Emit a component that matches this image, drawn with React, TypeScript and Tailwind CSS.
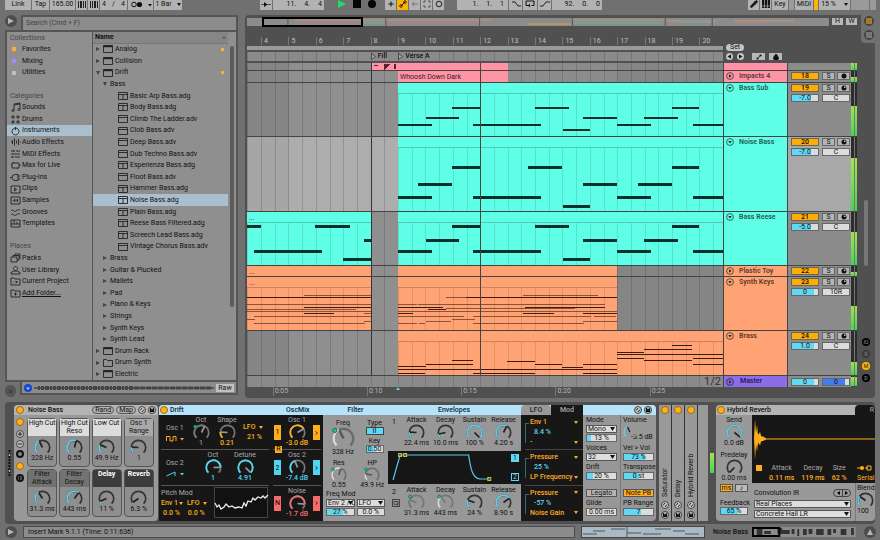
import type { ReactNode } from "react";
import { useId, useState } from "react";
import { clsx } from "clsx";
import { Lock, Pencil } from "lucide-react";

type Note = [x1: number, x2: number, y: number, faint?: boolean];

interface Clip {
  from: number;
  to: number;
  name?: string;
}

interface TrackData {
  name: string;
  color: string;
  height: string;
  size: number;
  number?: string;
  volume?: string;
  pan?: string;
  open?: boolean;
  selected?: boolean;
  audio?: boolean;
  thickness?: number;
  level: number;
  clips: Clip[];
  notes: Note[];
}

const VIEW = 476;
const BAR = 27.4;
const FIRST_BAR = 14;

const TRACKS: TrackData[] = [
  { name: "", color: "#ff94a6", height: "h-2", size: 8, level: 100, clips: [{ from: 125, to: 261 }], notes: [] },
  {
    name: "Impacts 4", color: "#ff94a6", height: "h-3", size: 12, number: "18", audio: true, level: 50,
    clips: [{ from: 151, to: 261, name: "Whoosh Down Dark" }], notes: [],
  },
  {
    name: "Bass Sub", color: "#5effe6", height: "h-[54px]", size: 54, number: "19", volume: "-7.0", pan: "C", open: true, level: 56, thickness: 2,
    clips: [{ from: 151, to: 476 }],
    notes: [[151, 185, 42], [179, 212, 35], [205, 233, 25], [226, 294, 42], [288, 322, 25], [316, 343, 47], [336, 370, 35], [370, 404, 42], [397, 431, 35], [425, 452, 25], [446, 476, 42]],
  },
  {
    name: "Noise Bass", color: "#5effe6", height: "h-[75px]", size: 75, number: "20", volume: "-7.0", pan: "C", open: true, selected: true, level: 72, thickness: 3,
    clips: [{ from: 151, to: 476 }],
    notes: [[151, 185, 60], [171, 205, 47], [205, 233, 30], [226, 294, 60], [281, 315, 30], [316, 343, 69], [336, 370, 47], [370, 404, 60], [391, 425, 47], [425, 452, 30], [446, 476, 60]],
  },
  {
    name: "Bass Reese", color: "#5effe6", height: "h-[54px]", size: 54, number: "21", volume: "-5.0", pan: "C", open: true, level: 62, thickness: 3,
    clips: [{ from: 0, to: 124, name: "..." }, { from: 151, to: 476 }],
    notes: [[0, 14, 14], [68, 103, 14], [117, 124, 28], [7, 75, 39], [96, 124, 47], [151, 185, 39], [179, 212, 28], [205, 233, 14], [226, 294, 39], [288, 322, 14], [316, 343, 47], [336, 370, 28], [370, 404, 39], [397, 431, 28], [425, 452, 14], [446, 476, 39]],
  },
  {
    name: "Plastic Toy", color: "#ffa374", height: "h-[11px]", size: 11, number: "22", level: 40,
    clips: [{ from: 0, to: 124, name: "..." }, { from: 151, to: 370 }], notes: [],
  },
  {
    name: "Synth Keys", color: "#ffa374", height: "h-[54px]", size: 54, number: "23", volume: "0", pan: "10R", open: true, level: 46, thickness: 1,
    clips: [{ from: 0, to: 124, name: "..." }, { from: 151, to: 370 }],
    notes: [
      [57, 124, 18, true], [0, 124, 20], [0, 124, 27, true], [57, 124, 30], [0, 109, 32, true], [0, 124, 34, true], [57, 87, 36], [117, 124, 36, true], [7, 124, 39, true], [0, 8, 42, true], [117, 124, 44, true], [7, 118, 46, true],
      [199, 219, 20, true], [219, 370, 20], [276, 351, 18, true], [151, 170, 27, true], [171, 358, 27, true], [151, 196, 30], [181, 199, 32], [278, 358, 30], [199, 328, 31, true], [151, 370, 34, true], [151, 166, 36], [276, 307, 36],
      [336, 370, 36], [151, 217, 39, true], [226, 344, 39, true], [347, 369, 39, true], [205, 228, 42, true], [179, 204, 44, true], [336, 370, 44, true], [151, 170, 46, true], [172, 178, 46, true], [226, 337, 46, true],
    ],
  },
  {
    name: "Brass", color: "#ffa374", height: "h-[45px]", size: 45, number: "24", volume: "1.0", pan: "C", open: true, level: 30, thickness: 1,
    clips: [{ from: 151, to: 476 }],
    notes: [
      [205, 226, 29], [179, 226, 33], [151, 179, 35], [151, 370, 38], [151, 178, 42], [226, 288, 42], [336, 370, 42], [260, 288, 30], [288, 315, 33], [336, 370, 33], [315, 336, 36],
      [370, 397, 21], [370, 476, 23], [370, 397, 27], [397, 445, 18], [425, 445, 14], [397, 445, 29], [446, 476, 27], [446, 476, 33],
    ],
  },
];

const GRID = Array.from({ length: 35 }, (_, i) => FIRST_BAR + ((i - 1) * BAR) / 2);

function TrackLane({ track }: { track: TrackData }) {
  const t = track.thickness ?? 1;
  return (
    <div className="relative min-w-0 flex-1 overflow-hidden">
      <svg className="absolute inset-0 h-full w-full" viewBox={`0 0 ${VIEW} ${track.size}`} preserveAspectRatio="none" shapeRendering="crispEdges">
        <rect width={VIEW} height={track.size} fill={track.selected ? "#a6a6a6" : "#858585"} />
        <rect x={42} width={109} height={track.size} fill={track.selected ? "#adadad" : "#8f8f8f"} />
        <rect x={261} width={109} height={track.size} fill="#8c8c8c" />
        {track.clips.map((c) => (
          <rect key={c.from} x={c.from} width={c.to - c.from} height={track.size} fill={track.color} />
        ))}
        {GRID.map((x) => {
          const inClip = track.clips.some((c) => x >= c.from && x < c.to);
          return <rect key={x} x={x} y={inClip ? 11 : 0} width={1} height={track.size} fill="#000" opacity={inClip ? 0.11 : 0.15} />;
        })}
        {track.open && track.clips.map((c) => (
          <rect key={c.from} x={c.from} y={10} width={c.to - c.from} height={1} fill="#000" opacity={0.2} />
        ))}
        {track.notes.map(([x1, x2, y, faint], i) => (
          <rect key={i} x={x1} y={y - Math.floor(t / 2)} width={x2 - x1} height={t} fill={track.color === "#5effe6" ? "#0b2f2c" : "#3d1c0c"} opacity={faint ? 0.6 : 1} />
        ))}
        {!track.name && <path d="M127 2h4v1h-4zM137 1l6 0l-6 6zM147 1h2v5h-2z" fill="#5c2430" />}
        <rect x={124} width={1} height={track.size} fill="#333" />
        <rect x={233} width={1} height={track.size} fill="#444" />
      </svg>
      {track.clips.map((c) =>
        c.name ? (
          <span key={c.from} className="absolute top-0 pl-0.5 leading-[12px] text-[#3a1a1f]" style={{ left: `${(c.from / VIEW) * 100}%` }}>
            {c.name}
          </span>
        ) : null
      )}
      <div className="absolute inset-x-0 bottom-0 h-px bg-[#444]" />
    </div>
  );
}

function Meter({ level }: { level: number }) {
  return (
    <div className="flex w-[6px] gap-px border-b border-[#444] bg-[#777]">
      {[0, 1].map((i) => (
        <div key={i} className="flex flex-1 flex-col justify-end bg-[#2c2c2c]">
          <div className="bg-linear-to-b from-[#a2e34c] to-[#3fd458]" style={{ height: `${level}%` }} />
        </div>
      ))}
    </div>
  );
}

function ValueBox({ label, value, fill = 0, color = "#5fd9f5", className }: { label: string; value: string; fill?: number; color?: string; className?: string }) {
  return (
    <div className={clsx("relative h-2 border border-[#666] bg-[#dcdcdc]", className)}>
      <div className="absolute inset-y-0 left-0" style={{ width: `${fill}%`, backgroundColor: color }} />
      <input aria-label={label} defaultValue={value} className="absolute inset-0 w-full bg-transparent text-center leading-none outline-none" />
    </div>
  );
}

function TrackRow({ track }: { track: TrackData }) {
  const [active, setActive] = useState(true);
  return (
    <div className={clsx("flex", track.height)}>
      <TrackLane track={track} />
      <div className="flex w-16 gap-1 border-b border-l border-[#444] pl-0.5 pt-px" style={{ backgroundColor: track.color }}>
        {track.name && (
          <>
            <button aria-label={`Fold ${track.name}`} className="h-2 w-2">
              <svg viewBox="0 0 8 8" className="h-2 w-2">
                <circle cx="4" cy="4" r="3.4" fill="none" stroke="#1d2b2a" strokeWidth=".7" />
                <path d={track.open ? "M2.300 3h3.400L4 5.600z" : "M3 2.300v3.400L5.600 4z"} fill="#222" />
              </svg>
            </button>
            <span className="pl-px font-bold leading-[9px] text-black/65">{track.name}</span>
          </>
        )}
      </div>
      <div className={clsx("w-16 border-b border-l border-[#444] pl-[3px] pt-px", track.selected ? "bg-[#a8a8a8]" : "bg-[#8c8c8c]")}>
        {track.number && (
          <div className="flex gap-0.5">
            <button onClick={() => setActive(!active)} className={clsx("h-2 w-[28px] border border-[#666] font-medium leading-[7px]", active ? "bg-[#ffad00]" : "bg-[#aaa]")}>
              {track.number}
            </button>
            <button className="ml-px h-2 w-[13px] border border-[#666] bg-[#b5b5b5] leading-[7px]">S</button>
            <button aria-label="Arm" className="flex h-2 w-[13px] items-center justify-center border border-[#666] bg-[#b5b5b5]">
              <svg viewBox="0 0 6 6" className="size-1.5">
                <circle cx="3" cy="3" r="2.500" fill="#111" />
                {!track.audio && <path d="M3 3V1.200A1.800 1.800 0 0 1 4.800 3z" fill="#b5b5b5" />}
              </svg>
            </button>
          </div>
        )}
        {track.volume && track.pan && (
          <div className="mt-0.5 flex gap-[3px]">
            <ValueBox label={`${track.name} volume`} value={track.volume} fill={track.volume.startsWith("-") ? 72 : 86} className="w-[28px]" />
            <ValueBox label={`${track.name} pan`} value={track.pan} className="w-[28px]" />
          </div>
        )}
      </div>
      <Meter level={track.level} />
    </div>
  );
}

function Cell({ children, className, label }: { children?: ReactNode; className?: string; label?: string }) {
  return (
    <button aria-label={label} className={clsx("flex h-[10px] items-center justify-center whitespace-nowrap pb-0.5", className)}>
      {children}
    </button>
  );
}

function TopBar() {
  return (
    <header className="flex h-[14px] items-start pl-[5px] pr-1">
      <div className="flex gap-px">
        <Cell className="w-[26px] bg-[#b2b2b2]">Link</Cell>
        <Cell className="w-[17px] bg-[#b2b2b2]">Tap</Cell>
        <Cell className="w-[25px] bg-[#b2b2b2]">165.00</Cell>
        <Cell className="w-[11px] bg-[#b2b2b2]" label="Nudge down"><svg viewBox="0 0 10 7" className="h-[7px] w-2.5"><path d="M1 0h1v7H1zM3 0h2v7H3zM6 0h1v7H6zM8 0h1v7H8z" fill="#222" /></svg></Cell>
        <Cell className="w-[11px] bg-[#b2b2b2]" label="Nudge up"><svg viewBox="0 0 10 7" className="h-[7px] w-2.5"><path d="M1 0h1v7H1zM3 0h1v7H3zM5 0h2v7H5zM8 0h1v7H8z" fill="#222" /></svg></Cell>
        <Cell className="w-[27px] gap-1.5 bg-[#b2b2b2]"><span>4</span><span>/</span><span>4</span></Cell>
        <Cell className="w-[25px] bg-[#b2b2b2]" label="Metronome"><svg viewBox="0 0 22 7" className="h-[7px] w-[22px]"><circle cx="4" cy="3.500" r="2.300" fill="none" stroke="#111" /><circle cx="9.500" cy="3.500" r="2.600" fill="#111" /><path d="M18 3h4l-2 2.500z" fill="#111" /></svg></Cell>
        <Cell className="w-[28px] gap-[5px] bg-[#b2b2b2]">1 Bar <Down /></Cell>
      </div>
      <div className="ml-[78px] flex gap-px">
        <Cell className="w-3 bg-[#b2b2b2]" label="Follow"><svg viewBox="0 0 10 7" className="h-[7px] w-2.5"><path d="M0 3.500h10" stroke="#222" strokeWidth=".7" /><path d="M3 1l3.500 2.500L3 6z" fill="#111" /></svg></Cell>
        <Cell className="w-[51px] justify-end gap-2 bg-[#b2b2b2] pr-0.5"><span>11.</span><span>4.</span><span>4</span></Cell>
      </div>
      <div className="ml-[11px] flex gap-1">
        <Cell className="w-[13px]" label="Play"><svg viewBox="0 0 8 8" className="size-2"><path d="M0 0l8 4-8 4z" fill="#20dd68" /></svg></Cell>
        <Cell className="w-[9px]" label="Stop"><svg viewBox="0 0 8 8" className="size-2"><path d="M0 0h8v8H0z" fill="#050505" /></svg></Cell>
        <Cell className="w-[13px]" label="Record"><svg viewBox="0 0 8 8" className="size-2"><circle cx="4" cy="4" r="4" fill="#050505" /></svg></Cell>
      </div>
      <div className="ml-[7px] flex gap-px">
        <Cell className="w-[11px] bg-[#b2b2b2]" label="Overdub"><svg viewBox="0 0 8 8" className="size-2"><path d="M4 1.500v5M1.500 4h5" stroke="#111" /></svg></Cell>
        <Cell className="w-[11px] bg-[#ffb300]" label="Automation arm"><svg viewBox="0 0 8 8" className="size-2"><path d="M2 6l4-4" stroke="#111" /><circle cx="2" cy="6" r="1.300" fill="none" stroke="#111" strokeWidth=".8" /><circle cx="6" cy="2" r="1.300" fill="none" stroke="#111" strokeWidth=".8" /></svg></Cell>
        <Cell className="w-[11px] bg-[#b2b2b2]" label="Re-enable automation"><svg viewBox="0 0 8 8" className="size-2"><path d="M1 4h6M3.500 2L1 4l2.500 2" stroke="#777" fill="none" /></svg></Cell>
        <Cell className="w-[11px] bg-[#b2b2b2]" label="Capture"><svg viewBox="0 0 8 8" className="size-2"><path d="M1 3V1h2M5 1h2v2M7 5v2H5M3 7H1V5" stroke="#555" fill="none" /></svg></Cell>
        <Cell className="w-[11px] bg-[#b2b2b2]" label="Session record"><svg viewBox="0 0 8 8" className="size-2"><circle cx="4" cy="4" r="2.800" fill="none" stroke="#222" /></svg></Cell>
      </div>
      <div className="ml-[13px] flex gap-px">
        <Cell className="w-[51px] justify-end gap-2 bg-[#b2b2b2] pr-1"><span>1.</span><span>1.</span><span>1</span></Cell>
        <Cell className="w-[13px] bg-[#b2b2b2]" label="Punch in"><svg viewBox="0 0 10 8" className="h-2 w-2.5"><path d="M1 2h3l3 4h3" stroke="#222" fill="none" /></svg></Cell>
        <Cell className="w-[14px] bg-[#b2b2b2]" label="Loop"><svg viewBox="0 0 10 8" className="h-2 w-2.5"><path d="M3.500 5.500H1V1h8v4.500H6.500" stroke="#111" fill="none" /><path d="M5 3.500l-2 2 2 2z" fill="#111" /></svg></Cell>
        <Cell className="w-[13px] bg-[#b2b2b2]" label="Punch out"><svg viewBox="0 0 10 8" className="h-2 w-2.5"><path d="M0 6h3l3-4h4" stroke="#222" fill="none" /></svg></Cell>
        <Cell className="w-[50px] justify-end gap-2 bg-[#b2b2b2] pr-0.5"><span>92.</span><span>0.</span><span>0</span></Cell>
      </div>
      <div className="ml-auto flex gap-px">
        <Cell className="w-[11px] bg-[#b2b2b2]" label="Draw mode"><Pencil className="size-2" strokeWidth={3} fill="#111" /></Cell>
        <Cell className="w-[11px] bg-[#b2b2b2]" label="MIDI keyboard"><svg viewBox="0 0 8 8" className="size-2"><path d="M0 0h8v8H0z" fill="#111" /><path d="M2.500 0v8M5.500 0v8M0 6h8" stroke="#aaa" strokeWidth=".7" /></svg></Cell>
        <Cell className="w-4 bg-[#b2b2b2]">Key</Cell>
        <Cell className="w-[5px] bg-[#9a9a9a]" label="Key indicator" />
        <Cell className="w-[18px] bg-[#b2b2b2]">MIDI</Cell>
        <Cell className="w-1 bg-[#ffb300]" label="CPU" />
        <Cell className="w-[31px] gap-2 bg-[#b2b2b2]">15 % <Down /></Cell>
        <Cell className="w-[18px] bg-[#9a9a9a]" label="Overload" />
        <Cell className="w-[6px] bg-[#9a9a9a]" label="Disk" />
      </div>
    </header>
  );
}

function Down() {
  return <svg viewBox="0 0 4 3" className="h-[3px] w-1 shrink-0"><path d="M0 0h4L2 3z" fill="currentColor" /></svg>;
}

const CATEGORY_ICONS: Record<string, string> = {
  Sounds: "M4 8V2l6-1v6M4 3l6-1M2 8.500a1 1 0 1 0 2 0a1 1 0 1 0-2 0M8 7.500a1 1 0 1 0 2 0a1 1 0 1 0-2 0",
  Drums: "M2 2h2v2H2zM7 2h2v2H7zM2 7h2v2H2zM7 7h2v2H7z",
  Instruments: "M5 2a3.500 3.500 0 1 0 1 0M5.500 1v3",
  "Audio Effects": "M1 5h1M2.500 3v4M4.500 1.500v7M6.500 3.500v3M8.500 2v6M10 5h1",
  "MIDI Effects": "M1 2h3M6 2h4M1 5h5M8 5h2M1 8h2M5 8h5M4 1v2M7 4v2M3 7v2",
  "Max for Live": "M2 3h7v5H2zM3.500 2v1M7.500 8v1M1 5h1M9 5h1.500",
  "Plug-Ins": "M8 2.500H5a3 3 0 0 0 0 6h3zM0 5.500h2M8 4h2.500M8 7h2.500",
  Clips: "M1 2h9v7H1zM4.500 4v3l2-1.500z",
  Samples: "M1 2h9v7H1zM3 5v1M4.500 4v3M6 4.500v2M7.500 4v3",
  Grooves: "M1 4c2-3 3 2 5 0s3-1 4-1M1 8c2-3 3 2 5 0s3-1 4-1",
  Templates: "M1 2h9v7H1zM1 6h9M4 2v4M7 4v2",
  Packs: "M1 4h6v5H1zM3 4V2.500h6V7H7M5 2V1h5v5",
  "User Library": "M5.500 1.500a2 2 0 1 0 .1 0M1 9V7.500L4 6h3l3 1.500V9z",
  "Current Project": "M1 9V2h3l1 1h5v6zM3.500 6h1M5.500 5l2 1-2 1",
  "Add Folder...": "M1 9V2h3l1 1h5v6zM5.500 4.500v3M4 6h3",
};

const SIDEBAR: { text?: string; heading?: boolean; swatch?: string }[] = [
  { text: "Collections", heading: true },
  { text: "Favorites", swatch: "bg-[#ffad33]" },
  { text: "Mixing", swatch: "bg-[#a48cf0]" },
  { text: "Utilities", swatch: "bg-[#c4baba]" },
  {},
  { text: "Categories", heading: true },
  { text: "Sounds" }, { text: "Drums" }, { text: "Instruments" }, { text: "Audio Effects" }, { text: "MIDI Effects" }, { text: "Max for Live" },
  { text: "Plug-Ins" }, { text: "Clips" }, { text: "Samples" }, { text: "Grooves" }, { text: "Templates" },
  {},
  { text: "Places", heading: true },
  { text: "Packs" }, { text: "User Library" }, { text: "Current Project" }, { text: "Add Folder..." },
];

const FILES: { name: string; level: 0 | 1 | 2; open?: boolean; starred?: boolean; folder?: boolean }[] = [
  { name: "Analog", level: 0, starred: true },
  { name: "Collision", level: 0 },
  { name: "Drift", level: 0, open: true, starred: true },
  { name: "Bass", level: 1, open: true },
  ...["Basic Arp Bass.adg", "Body Bass.adg", "Climb The Ladder.adv", "Clob Bass.adv", "Deep Bass.adv", "Dub Techno Bass.adv", "Esperienza Bass.adg", "Floot Bass.adv", "Hammer Bass.adg", "Noise Bass.adg", "Plain Bass.adg", "Reese Bass Filtered.adg", "Screech Lead Bass.adg", "Vintage Chorus Bass.adv"].map((name) => ({ name, level: 2 as const })),
  ...["Brass", "Guitar & Plucked", "Mallets", "Pad", "Piano & Keys", "Strings", "Synth Keys", "Synth Lead"].map((name) => ({ name, level: 1 as const })),
  { name: "Drum Rack", level: 0 },
  { name: "Drum Synth", level: 0, folder: true },
  { name: "Electric", level: 0 },
];

function FileIcon({ name, folder }: { name: string; folder?: boolean }) {
  const rack = name.endsWith(".adg");
  const preset = rack || name.endsWith(".adv");
  return (
    <svg viewBox="0 0 10 8" className="h-2 w-2.5 shrink-0" fill="none" stroke="#222" strokeWidth=".9">
      <path d={folder ? "M.5 7.500v-7h3l1 1h5v6z" : "M.5.5h9v7h-9z"} />
      {!folder && <path d={preset ? "M.5 2.500h9" : "M.5 1.300h9"} strokeWidth={preset ? 0.9 : 1.8} />}
      {rack && <path d="M5 2.500v5" />}
    </svg>
  );
}

function Browser() {
  const [selected, setSelected] = useState("Noise Bass.adg");
  const [category, setCategory] = useState("Instruments");
  return (
    <section className="flex w-[233px] shrink-0 flex-col">
      <div className="flex h-[15px] gap-1">
        <button aria-label="Hide browser" className="size-3 rounded-full bg-[#4d4d4d] p-[3px]">
          <svg viewBox="0 0 6 6"><path d="M0 0l6 3-6 3z" fill="#b5b5b5" /></svg>
        </button>
        <div className="flex flex-1 border-2 border-b-0 border-[#555] bg-[#8c8c8c]">
          <input type="search" aria-label="Search" placeholder="Search (Cmd + F)" className="w-full bg-transparent pl-[3px] outline-none placeholder:text-[#444]" />
        </div>
      </div>
      <div className="flex min-h-0 flex-1 border-2 border-[#555] bg-[#8f8f8f]">
        <nav className="grid w-[85px] grid-rows-[repeat(30,minmax(0,1fr))]">
          {SIDEBAR.map((item, i) =>
            !item.text ? <span key={i} /> : item.heading ? (
              <h2 key={i} className="flex items-center pl-[3px] text-[#444]">{item.text}</h2>
            ) : (
              <button
                key={i}
                onClick={() => setCategory(item.text ?? "")}
                className={clsx("flex items-center gap-px pl-[3px]", item.text === category && "bg-[#aabfcd]", item.text === "Add Folder..." && "underline")}
              >
                {item.swatch ? <span className="flex w-[11px] pl-0.5"><span className={clsx("size-1", item.swatch)} /></span> : (
                  <svg viewBox="0 0 11 10" className="h-2.5 w-[11px]" fill="none" stroke="#222" strokeWidth=".9"><path d={CATEGORY_ICONS[item.text]} /></svg>
                )}
                {item.text}
              </button>
            )
          )}
        </nav>
        <div className="relative grid min-w-0 flex-1 grid-rows-[repeat(30,minmax(0,1fr))] border-l border-[#555] pr-2">
          <div className="flex items-center justify-between border-b border-[#777] bg-[#868686] pl-0.5 pr-0.5 font-bold">
            Name <svg viewBox="0 0 4 4" className="size-1"><path d="M0 4l2-4 2 4z" fill="#666" /></svg>
          </div>
          {FILES.map((f) => (
            <button
              key={f.name}
              onClick={() => setSelected(f.name)}
              className={clsx("flex items-center gap-0.5", f.level === 0 ? "pl-[3px]" : f.level === 1 ? "pl-2.5" : "pl-[25px]", f.name === selected && "bg-[#aabfcd]")}
            >
              {f.level < 2 && (
                <svg viewBox="0 0 4 4" className="mr-px size-1 shrink-0"><path d={f.open ? "M0 0h4L2 4z" : "M0 0v4l4-2z"} fill="#444" /></svg>
              )}
              {f.level !== 1 && <FileIcon name={f.name} folder={f.folder} />}
              <span className="whitespace-nowrap">{f.name}</span>
              {f.starred && <span className="ml-auto mr-1 size-[3px] bg-[#ffad33]" />}
            </button>
          ))}
          <div className="absolute right-0.5 top-3.5 h-3/4 w-1 rounded bg-[#5b5b5b]" />
        </div>
      </div>
      <div className="flex h-4 items-start gap-1">
        <button aria-label="Preview" className="mt-[3px] size-3 rounded-full bg-[#555] p-[3px]">
          <svg viewBox="0 0 6 6"><path d="M1 2h4M1 4h4" stroke="#333" /></svg>
        </button>
        <div className="flex h-[13px] flex-1 items-center gap-0.5 border-2 border-t-0 border-[#555] bg-[#8c8c8c] px-0.5">
          <svg viewBox="0 0 8 8" className="size-2"><circle cx="4" cy="4" r="4" fill="#1747d1" /><path d="M2 3.500h4L4 6z" fill="#bcd" /></svg>
          <svg viewBox="0 0 180 6" preserveAspectRatio="none" className="h-1.5 min-w-0 flex-1">
            <path d="M0 3h180" stroke="#444" strokeWidth="1.500" />
            <path d="M4 3h96" stroke="#444" strokeWidth="4" strokeDasharray="2 1 3 1 4 1" />
            <path d="M100 3h78" stroke="#444" strokeWidth="3" strokeDasharray="5 1" />
          </svg>
          <button className="h-[8px] w-[18px] bg-[#c2c2c2] leading-[8px]">Raw</button>
        </div>
      </div>
    </section>
  );
}

function Arrangement() {
  return (
    <section className="flex min-w-0 flex-1 flex-col rounded-sm bg-[#505050] pl-0.5">
      <div className="flex h-12 gap-1">
        <div className="min-w-0 flex-1">
          <div className="mt-[3px] flex h-2 gap-[3px]">
            <div className="relative flex-1 bg-[#8c8c8c]">
              <svg viewBox="0 0 583 8" preserveAspectRatio="none" className="absolute inset-0 h-full w-full" shapeRendering="crispEdges">
                <path d="M48 2h195M326 2h92M420 3h50M488 3h60" stroke="#c69672" />
                <path d="M115 5h24M326 5h90M430 4h34" stroke="#5cb8ab" />
                <path d="M48 4h67M139 5h94M490 5h30" stroke="#b07f87" />
                <path d="M281 6h44" stroke="#d8a53f" />
                <path d="M41 0v8M139 0v8M233 0v8M326 0v8M419 0v8M466 0v8" stroke="#555" />
              </svg>
              <div className="absolute -inset-y-px left-[15px] w-[101px] border-2 border-black" />
            </div>
            <button className="h-[7px] w-[11px] bg-[#b8b8b8] leading-[7px]">H</button>
            <button className="h-[7px] w-[11px] bg-[#b8b8b8] leading-[7px]">W</button>
          </div>
          <div className="flex h-[37px]">
            <div className="flex min-w-0 flex-1 flex-col">
              <div className="relative h-5 overflow-hidden text-[#c0c0c0]">
                {Array.from({ length: 17 }, (_, i) => (
                  <span key={i} className="absolute bottom-px border-l border-[#777] pl-0.5 leading-[8px]" style={{ left: `${((FIRST_BAR + i * BAR) / VIEW) * 100}%` }}>
                    {i + 4}
                  </span>
                ))}
              </div>
              <div className="h-[4px] bg-[#999]" />
              <div className="relative mt-0.5 h-[9px] bg-[#8a8a8a]">
                <svg viewBox="0 0 476 9" preserveAspectRatio="none" className="absolute inset-0 h-full w-full" shapeRendering="crispEdges">
                  {GRID.map((x) => <rect key={x} x={x} width={1} height={9} fill="#000" opacity={0.15} />)}
                </svg>
                <span className="absolute left-[26%] flex items-center gap-0.5 font-medium leading-[9px]"><Locator />Fill</span>
                <span className="absolute left-[31.800%] flex items-center gap-0.5 font-medium leading-[9px]"><Locator />Verse A</span>
              </div>
            </div>
            <div className="w-[134px] pl-[3px] pt-[18px]">
              <button className="block h-[7px] rounded-full bg-[#c4c4c4] px-1 leading-[7px]">Set</button>
              <div className="mt-0.5 flex items-center gap-1">
                <button aria-label="Previous locator" className="size-[7px] rounded-full bg-[#c4c4c4]"><svg viewBox="0 0 7 7"><path d="M5 1.500v4l-3.500-2z" fill="#111" /></svg></button>
                <button aria-label="Next locator" className="size-[7px] rounded-full bg-[#c4c4c4]"><svg viewBox="0 0 7 7"><path d="M2 1.500v4l3.500-2z" fill="#111" /></svg></button>
                <button aria-label="Automation mode" className="ml-1 flex h-[7px] w-[13px] items-center justify-center bg-[#b8b8b8]">
                  <svg viewBox="0 0 6 6" className="size-1.5"><path d="M1 5l4-4" stroke="#111" strokeWidth=".8" /><circle cx="1.500" cy="4.500" r="1.100" fill="#111" /><circle cx="4.500" cy="1.500" r="1.100" fill="#111" /></svg>
                </button>
                <button aria-label="Lock envelopes" className="flex h-[7px] w-[13px] items-center justify-center bg-[#b8b8b8]"><Lock className="size-1.5" strokeWidth={4} fill="#111" /></button>
              </div>
            </div>
          </div>
        </div>
        <div className="flex h-7 w-[14px] flex-col items-center gap-1 rounded-bl bg-[#707070] pl-0.5 pt-px">
          <button aria-label="Arrangement view" className="size-2.5 rounded-full bg-[#444] p-0.5"><svg viewBox="0 0 6 6"><path d="M0 1h6M0 3h6M0 5h6" stroke="#ffb01a" /></svg></button>
          <button aria-label="Session view" className="size-2.5 rounded-full bg-[#444] p-0.5"><svg viewBox="0 0 6 6"><path d="M1 0v6M3 0v6M5 0v6" stroke="#aaa" /></svg></button>
        </div>
      </div>
      <div className="flex">
        <div className="min-w-0 flex-1">
          {TRACKS.map((t, i) => <TrackRow key={i} track={t} />)}
          <div className="flex h-[11px]">
            <div className="relative flex-1 bg-[#8a8a8a]">
              <svg viewBox="0 0 476 11" preserveAspectRatio="none" className="absolute inset-0 h-full w-full" shapeRendering="crispEdges">
                {GRID.map((x) => <rect key={x} x={x} width={1} height={11} fill="#000" opacity={0.12} />)}
              </svg>
              <span className="absolute right-0.5 text-[11px] leading-[11px] text-[#333]">1/2</span>
            </div>
            <div className="flex w-16 items-center gap-1 border-l border-[#444] bg-[#8b6de8] pl-0.5">
              <button aria-label="Fold Master" className="size-2"><svg viewBox="0 0 8 8"><circle cx="4" cy="4" r="3.400" fill="none" stroke="#222" strokeWidth=".8" /><path d="M3 2.300v3.400L5.600 4z" fill="#222" /></svg></button>
              <span className="pl-0.5 font-bold text-[#2c2060]">Master</span>
            </div>
            <div className="flex w-16 items-center gap-[3px] border-l border-[#444] bg-[#8c8c8c] pl-[3px]">
              <ValueBox label="Master volume" value="0" fill={86} className="w-[28px]" />
              <ValueBox label="Master pan" value="0" fill={84} color="#3f7cf5" className="w-[28px]" />
            </div>
            <Meter level={90} />
          </div>
        </div>
        <div className="flex w-[18px] flex-col items-center justify-end">
          <div className="mb-[72px] h-[66px] w-1 rounded bg-[#777]" />
          <div className="mb-[5px] flex flex-col gap-1 text-[5px] leading-[8px]">
            {["IO", "R", "M", "D"].map((c) => (
              <button key={c} className={clsx("size-2 rounded-full", c === "M" ? "bg-[#ffb300]" : c === "R" ? "bg-[#3c3c3c] text-[#888]" : "bg-black text-[#aaa]")}>{c}</button>
            ))}
          </div>
        </div>
      </div>
      <div className="relative mr-[152px] h-[11px] text-[#b5b5b5]">
        {["0:05", "0:10", "0:15", "0:20", "0:25"].map((t, i) => (
          <span key={t} className="absolute border-l border-[#777] pl-px leading-[9px]" style={{ left: `${5.4 + i * 19.8}%` }}>{t}</span>
        ))}
        <svg viewBox="0 0 4 3" className="absolute left-[31.300%] top-0 h-[3px] w-1"><path d="M0 3l2-3 2 3z" fill="#6cc8f0" /></svg>
      </div>
    </section>
  );
}

function Locator() {
  return <svg viewBox="0 0 5 7" className="h-[7px] w-[5px]"><path d="M.5.5v6l4-3z" fill="#aaa" stroke="#333" strokeWidth=".8" /></svg>;
}

interface KnobProps {
  label: string;
  value: string;
  at: number;
  size?: string;
  color?: string;
  track?: string;
  pointer?: string;
  dot?: boolean;
  hideLabel?: boolean;
  valueClass?: string;
  className?: string;
}

function arc(from: number, to: number) {
  const point = (v: number) => {
    const a = ((v * 270 - 225) * Math.PI) / 180;
    return `${10 + 8.5 * Math.cos(a)} ${10 + 8.5 * Math.sin(a)}`;
  };
  return `M${point(from)}A8.5 8.5 0 ${(to - from) * 270 > 180 ? 1 : 0} 1 ${point(to)}`;
}

function Knob({ label, value, at, size = "size-[17px]", color = "#5ad2ea", track = "#333", pointer = "#222", dot, hideLabel, valueClass, className }: KnobProps) {
  const id = useId();
  const a = ((at * 270 - 225) * Math.PI) / 180;
  return (
    <div className={clsx("flex flex-col items-center whitespace-nowrap", className)}>
      {!hideLabel && <label htmlFor={id} className="leading-[8px]">{label}</label>}
      <div className={clsx("relative shrink-0", size)}>
        <svg viewBox="0 0 20 20" className="h-full w-full" fill="none" strokeWidth="2">
          <path d={arc(0, 1)} stroke={track} />
          {at > 0.01 && <path d={arc(0, at)} stroke={color} />}
          <path d={`M10 10L${10 + 8 * Math.cos(a)} ${10 + 8 * Math.sin(a)}`} stroke={pointer} />
          {dot && <circle cx="2.500" cy="3" r="1.800" fill="#1fcb8d" stroke="#0b6647" strokeWidth=".8" />}
        </svg>
        <input id={id} aria-label={hideLabel ? label : undefined} type="range" min={0} max={1} step={0.01} defaultValue={at} className="absolute inset-0 h-full w-full opacity-0" />
      </div>
      {value && <span className={clsx("-mt-0.5 leading-[8px]", valueClass)}>{value}</span>}
    </div>
  );
}

function MiniSelect({ label, value, className }: { label: string; value: string; className?: string }) {
  return (
    <div className={clsx("relative h-2 border border-[#555] bg-[#dedede]", className)}>
      <select aria-label={label} className="absolute -inset-y-px inset-x-0 w-full appearance-none bg-transparent pl-px leading-[8px] outline-none">
        <option>{value}</option>
      </select>
      <svg viewBox="0 0 5 4" className="pointer-events-none absolute right-px top-px h-1 w-[5px]"><path d="M0 0h5L2.500 4z" fill="#111" /></svg>
    </div>
  );
}

function DarkSelect({ label, value, className }: { label: string; value: string; className?: string }) {
  return (
    <div className={clsx("relative flex h-[10px] items-center", className)}>
      <select aria-label={label} className="w-full appearance-none bg-transparent leading-[10px] outline-none">
        <option>{value}</option>
      </select>
      <span className="pointer-events-none absolute right-0"><Down /></span>
    </div>
  );
}

function Power({ label }: { label: string }) {
  return <button aria-label={label} className="size-2 shrink-0 rounded-full border border-[#9a6c10] bg-[#ffb01a]" />;
}

function SaveIcons() {
  return (
    <>
      <button aria-label="Hot-swap" className="size-2 rounded-full border border-[#444] bg-[#c8c8c8]">
        <svg viewBox="0 0 6 6"><path d="M1 3.500L3 1M5 2.500L3 5" stroke="#222" /></svg>
      </button>
      <button aria-label="Save preset" className="size-2">
        <svg viewBox="0 0 8 8" className="size-2">
          <circle cx="4" cy="4" r="3.600" fill="#aaa" stroke="#333" strokeWidth=".8" />
          <path d="M2 2h3.500l.5.5V6H2z" fill="#111" />
          <path d="M3.200 2h1.600v1.300H3.200z" fill="#ccc" />
        </svg>
      </button>
    </>
  );
}

const MACROS = [
  { label: "High Cut", value: "328 Hz", at: 0.4, head: "bg-[#dcdcdc]" },
  { label: "High Cut\nReso", value: "0.55", at: 0.55, head: "bg-[#dcdcdc]" },
  { label: "Low Cut", value: "49.9 Hz", at: 0.25, head: "bg-[#dcdcdc]" },
  { label: "Osc 1\nRange", value: "1", at: 0.18, head: "bg-[#a8a8a8]" },
  { label: "Filter\nAttack", value: "31.3 ms", at: 0.38, head: "bg-[#727272]" },
  { label: "Filter\nDecay", value: "443 ms", at: 0.63, head: "bg-[#727272]" },
  { label: "Delay", value: "11 %", at: 0.08, head: "bg-[#3c3c3c] text-white font-bold" },
  { label: "Reverb", value: "6.3 %", at: 0.04, head: "bg-[#3c3c3c] text-white font-bold" },
];

function Rack() {
  return (
    <section className="flex w-[144px] flex-col rounded-sm bg-[#999]">
      <div className="flex h-[10px] shrink-0 items-center gap-0.5 rounded-t-sm bg-[#b4b4b4] px-0.5">
        <Power label="Noise Bass on" />
        <h2 className="mr-auto pl-0.5 font-medium">Noise Bass</h2>
        <button className="h-2 rounded-full border border-[#555] px-0.5 leading-[7px]">Rand</button>
        <button className="h-2 rounded-full border border-[#555] px-0.5 leading-[7px]">Map</button>
        <SaveIcons />
      </div>
      <div className="flex flex-1 gap-[3px] pb-1 pl-0.5 pr-1 pt-[3px]">
        <div className="flex flex-col gap-0.5 text-[6px] leading-[7px]">
          <button aria-label="Show macros" className="mb-0.5 size-2 rounded-full border border-[#9a6c10] bg-[#ffb01a]" />
          <button aria-label="Add macro" className="size-2"><svg viewBox="0 0 8 8"><circle cx="4" cy="4" r="3.500" fill="#bbb" stroke="#333" strokeWidth=".8" /><path d="M4 2v4M2 4h4" stroke="#222" /></svg></button>
          <button aria-label="Remove macro" className="size-2"><svg viewBox="0 0 8 8"><circle cx="4" cy="4" r="3.500" fill="#bbb" stroke="#333" strokeWidth=".8" /><path d="M2 4h4" stroke="#222" /></svg></button>
          <button aria-label="Variations" className="size-2 rounded-full border-2 border-[#111] bg-[#888]" />
          <button aria-label="Show chains" className="my-0.5 size-2 rounded-full border border-[#9a6c10] bg-[#ffb01a]" />
          <button aria-label="Show devices" className="size-2"><svg viewBox="0 0 8 8"><circle cx="4" cy="4" r="4" fill="#111" /><path d="M2 3h1M4 3h2M2 5h1M4 5h2" stroke="#aaa" strokeWidth=".8" /></svg></button>
        </div>
        <div className="grid flex-1 grid-cols-4 grid-rows-2 gap-x-0.5 gap-y-0.5">
          {MACROS.map((m) => (
            <div key={m.label} className="flex flex-col items-stretch rounded-sm border border-[#555] bg-[#8e8e8e]">
              <span className={clsx("h-[17px] whitespace-pre text-center leading-[8px]", m.head)}>{m.label}</span>
              <Knob label={m.label} value={m.value} at={m.at} hideLabel className="mt-[3px]" />
            </div>
          ))}
        </div>
      </div>
    </section>
  );
}

const MIX = [
  { tag: "1", label: "Osc 1", value: "-3.0 dB", at: 0.72, bg: "bg-[#ffad1f]", text: "text-[#ffad1f]", color: "#ffad1f" },
  { tag: "2", label: "Osc 2", value: "-7.4 dB", at: 0.42, bg: "bg-[#4fd5f0]", text: "text-[#4fd5f0]", color: "#4fd5f0" },
  { tag: "N", label: "Noise", value: "-1.7 dB", at: 0.85, bg: "bg-[#f56b6b]", text: "text-[#f56b6b]", color: "#f56b6b" },
];

const DARK = { track: "#777", pointer: "#999" };

function Oscillators() {
  return (
    <div className="flex w-[164px] gap-1 bg-[#171717] px-0.5 text-[#aaa]">
      <div className="grid flex-1 grid-rows-3">
        <div className="flex border-b border-[#555]">
          <div className="w-[27px] pl-[5px] pt-2">
            Osc 1
            <svg viewBox="0 0 18 7" className="mt-px h-[7px] w-[18px]"><path d="M.5 6V1.500H4V6h3V1.500h3V6" fill="none" stroke="#ffad1f" /><path d="M14 3h4l-2 2.500z" fill="#ffad1f" /></svg>
          </div>
          <Knob label="Oct" value="1" at={0.6} {...DARK} color="#777" dot className="w-[26px] pt-px" />
          <Knob label="Shape" value="0.21" at={0.18} {...DARK} color="#ffad1f" valueClass="font-medium text-[#ffad1f]" className="w-[26px] pt-px" />
          <div className="ml-[3px] pt-[7px] font-medium text-[#ffad1f]">
            <DarkSelect label="Shape modulation source" value="LFO" className="w-5" />
            <span className="pl-1">21 %</span>
          </div>
        </div>
        <div className="flex border-b border-[#555]">
          <div className="w-[35px] pl-[5px] pt-2">
            Osc 2
            <svg viewBox="0 0 18 7" className="mt-px h-[7px] w-[18px]"><path d="M.5 6L9 2v4" fill="none" stroke="#4fd5f0" /><path d="M14 3h4l-2 2.500z" fill="#4fd5f0" /></svg>
          </div>
          <Knob label="Oct" value="1" at={0.83} {...DARK} color="#4fd5f0" valueClass="font-medium text-[#4fd5f0]" className="w-[34px] pt-px" />
          <Knob label="Detune" value="4.91" at={1} {...DARK} color="#4fd5f0" valueClass="font-medium text-[#4fd5f0]" className="w-[30px] pt-px" />
        </div>
        <div className="flex">
          <div className="w-[52px] pt-0.5">
            Pitch Mod
            <div className="flex gap-1 font-medium text-[#ffad1f]">
              <DarkSelect label="Pitch mod source 1" value="Env 1" className="w-[22px]" />
              <DarkSelect label="Pitch mod source 2" value="LFO" className="w-5" />
            </div>
            <div className="flex gap-2 pl-0.5 font-medium text-[#ffad1f]"><span>0.0 %</span><span>0.0 %</span></div>
          </div>
          <svg viewBox="0 0 54 31" className="mt-px h-[31px] min-w-0 flex-1">
            <rect x=".5" y=".5" width="53" height="30" fill="#111" stroke="#444" />
            <path d="M1 16l2 4 2-2 2 4 3-2 2-3 3 3 3-1 3 2 4-1 3 1 2-5 2 3 2-5 3 1 2-4 2 2 3-3 3 1 2-2 2 2 3-3" fill="none" stroke="#eee" strokeWidth="1.300" />
          </svg>
        </div>
      </div>
      <div className="grid w-12 grid-rows-3">
        {MIX.map((m, i) => (
          <div key={m.tag} className={clsx("relative flex items-start justify-between px-px text-black", i < 2 && "border-b border-[#555]")}>
            <button className={clsx("mt-[10px] h-[15px] w-[7px]", m.bg)}>{m.tag}</button>
            <Knob label={m.label} value={m.value} at={m.at} {...DARK} color={m.color} valueClass={clsx("font-medium", m.text)} className="w-6 pt-px text-[#aaa]" />
            <button aria-label={`${m.label} to filter`} className={clsx("mt-[10px] flex h-[15px] w-[7px] items-center justify-center", m.bg)}>
              <svg viewBox="0 0 3 4" className="h-1 w-[3px]"><path d="M.5.5L2.500 2 .5 3.500" fill="none" stroke="#222" strokeWidth=".8" /></svg>
            </button>
            {i === 0 && <button className="absolute -bottom-1 left-0.5 z-10 h-[7px] w-[7px] bg-[#ffad1f] leading-[7px]">R</button>}
          </div>
        ))}
      </div>
    </div>
  );
}

function Filter() {
  return (
    <div className="flex w-[65px] flex-col px-[3px] pt-1">
      <div className="grid h-10 grid-cols-[34px_1fr] gap-1">
        <Knob label="Freq" value="328 Hz" at={0.4} size="size-[23px]" dot color="#dcdcdc" track="#6b6b6b" pointer="#555" />
        <div className="flex flex-col items-center leading-[8px]">
          <span>Type</span>
          <button className="mb-0.5 h-2 w-[18px] border border-[#444] bg-[#5fd9f5] leading-[6px]">II</button>
          <span>Key</span>
          <ValueBox label="Key" value="0.50" fill={50} className="w-[18px] shrink-0" />
        </div>
      </div>
      <div className="grid h-[31px] grid-cols-2">
        <Knob label="Res" value="0.55" at={0.55} size="size-[16px]" dot color="#dcdcdc" track="#6b6b6b" pointer="#555" className="pr-1" />
        <Knob label="HP" value="49.9 Hz" at={0.2} size="size-[16px]" dot color="#dcdcdc" track="#6b6b6b" pointer="#555" className="pl-1" />
      </div>
      <span className="leading-[8px]">Freq Mod</span>
      <div className="mt-px grid grid-cols-2 gap-x-0.5 gap-y-px">
        <MiniSelect label="Filter mod source 1" value="Env 2 / C" />
        <MiniSelect label="Filter mod source 2" value="LFO" />
        <ValueBox label="Filter mod amount 1" value="27 %" fill={62} />
        <ValueBox label="Filter mod amount 2" value="0.0 %" fill={0} />
      </div>
    </div>
  );
}

function Envelopes() {
  return (
    <div className="flex w-[133px] flex-col">
      <div className="flex h-[36px] pl-1 pr-[3px] pt-px">
        <span className="w-2.5 pt-px">1</span>
        <div className="grid flex-1 grid-cols-4">
          <Knob label="Attack" value="22.4 ms" at={0.18} />
          <Knob label="Decay" value="10.0 ms" at={0.12} />
          <Knob label="Sustain" value="100 %" at={1} />
          <Knob label="Release" value="4.20 s" at={0.6} />
        </div>
      </div>
      <div className="relative h-[33px] bg-[#161616]">
        <svg viewBox="0 0 132 33" preserveAspectRatio="none" className="h-full w-full" fill="none">
          <path d="M5 29L12 4h68c2 14 4 24 12 24h9" stroke="#5cc4ea" strokeWidth="1.200" />
          <path d="M10.500 2.500h3v3h-3zM15.500 2.500h3v3h-3zM99 26.500h3v3h-3z" stroke="#d9bb35" />
        </svg>
        <button className="absolute right-0.5 top-[3px] size-2 bg-[#5fd9f5] leading-[8px]">1</button>
        <button className="absolute bottom-[3px] right-0.5 size-2 border border-[#5fd9f5] leading-[6px] text-[#5fd9f5]">2</button>
      </div>
      <div className="flex pl-1 pr-[3px] pt-0.5">
        <div className="w-2.5 pt-px">2
          <button aria-label="Cycle" className="mt-px block size-2 border border-[#444]"><svg viewBox="0 0 6 6"><path d="M2 4.500H1v-3h4v3H3.500M4.500 3L3 4.500 4.500 6" stroke="#222" fill="none" strokeWidth=".7" /></svg></button>
        </div>
        <div className="grid flex-1 grid-cols-4">
          <Knob label="Attack" value="31.3 ms" at={0.25} dot color="#777" track="#777" pointer="#777" />
          <Knob label="Decay" value="443 ms" at={0.35} dot color="#dcdcdc" track="#777" pointer="#777" />
          <Knob label="Sustain" value="24 %" at={0.24} />
          <Knob label="Release" value="8.90 s" at={0.7} />
        </div>
      </div>
    </div>
  );
}

const MODS = [
  { source: "Env 1", amount: "8.4 %", target: "-" },
  { source: "Pressure", amount: "25 %", target: "LP Frequency" },
  { source: "Pressure", amount: "-57 %", target: "Noise Gain" },
];

function ModMatrix() {
  return (
    <div className="grid w-[62px] grid-rows-3 bg-[#171717] pl-1 font-medium text-[#ffad1f]">
      {MODS.map((m, i) => (
        <div key={i} className={clsx("relative pl-[5px] pr-[5px] pt-0.5", i < 2 && "border-b border-[#444]")}>
          <DarkSelect label={`Mod ${i + 1} source`} value={m.source} />
          <div className="h-[10px] pl-1 leading-[10px] text-[#5fd9f5]">{m.amount}</div>
          <DarkSelect label={`Mod ${i + 1} target`} value={m.target} />
          <div className="absolute left-0 top-2 h-[20px] w-1 border-l border-t border-[#2f6d79]" />
        </div>
      ))}
    </div>
  );
}

function Globals() {
  return (
    <div className="flex min-w-0 flex-1 leading-[9px]">
      <div className="flex w-[38px] flex-col border-r border-[#777] px-[3px] pt-px">
        <span>Mode</span>
        <MiniSelect label="Mode" value="Mono" />
        <ValueBox label="Mode amount" value="13 %" fill={14} className="mt-px" />
        <span className="mt-0.5">Voices</span>
        <MiniSelect label="Voices" value="32" />
        <span className="mt-0.5">Drift</span>
        <ValueBox label="Drift" value="20 %" fill={20} />
        <button className="mt-[9px] h-2 border border-[#555] bg-[#b5b5b5] leading-[6px]">Legato</button>
        <span className="mt-0.5">Glide</span>
        <ValueBox label="Glide" value="0.00 ms" />
      </div>
      <div className="flex min-w-0 flex-1 flex-col px-0.5 pt-px">
        <span>Volume</span>
        <div className="flex h-[17px]">
          <Knob label="Volume" value="" at={0.4} size="size-[14px]" track="#999" hideLabel />
          <span className="-ml-1.5 whitespace-nowrap pt-2">-3.5 dB</span>
        </div>
        <span className="mt-0.5 whitespace-nowrap">Vel &gt; Vol</span>
        <ValueBox label="Velocity to volume" value="73 %" fill={73} />
        <span className="mt-0.5">Transpose</span>
        <ValueBox label="Transpose" value="0 st" fill={50} />
        <button className="mt-[9px] h-2 whitespace-nowrap border border-[#555] bg-[#ffad1f] leading-[6px]">Note PB</button>
        <span className="mt-0.5 whitespace-nowrap">PB Range</span>
        <ValueBox label="Pitch bend range" value="7" fill={58} />
      </div>
    </div>
  );
}

function Drift() {
  return (
    <section className="flex w-[497px] flex-col rounded-sm bg-[#979797]">
      <div className="flex h-[10px] shrink-0 items-center rounded-t-sm bg-[#b5e3fc] pl-px font-medium text-[#11242e]">
        <Power label="Drift on" />
        <h2 className="w-[118px] pl-0.5">Drift</h2>
        <span className="w-[38px]">OscMix</span>
        <span className="w-[63px] text-center">Filter</span>
        <span className="w-[134px] text-center">Envelopes</span>
        <button className="h-[10px] w-[30px] rounded-t bg-[#999]">LFO</button>
        <button className="h-[10px] w-[32px] bg-[#171717] text-[#aaa]">Mod</button>
        <div className="ml-auto flex gap-0.5 pr-1"><SaveIcons /></div>
      </div>
      <div className="flex flex-1">
        <Oscillators />
        <Filter />
        <Envelopes />
        <ModMatrix />
        <Globals />
      </div>
    </section>
  );
}

function FoldedDevice({ name }: { name: string }) {
  return (
    <section className="flex w-[13px] flex-col items-center gap-0.5 border-r border-[#333] bg-[#999] pb-0.5 pt-px">
      <Power label={`${name} on`} />
      <h2 className="flex-1 rotate-180 whitespace-nowrap pt-0.5 leading-[12px] [writing-mode:vertical-rl]">{name}</h2>
      <SaveIcons />
    </section>
  );
}

function HybridReverb() {
  return (
    <section className="flex min-w-0 flex-1 flex-col overflow-hidden rounded-sm bg-[#999]">
      <div className="flex h-[10px] shrink-0 items-center rounded-t-sm bg-[#b4b4b4] pl-px">
        <Power label="Hybrid Reverb on" />
        <h2 className="mr-auto pl-0.5 font-medium">Hybrid Reverb</h2>
        <div className="h-[10px] w-5 rounded-tl bg-[#171717] pr-px text-right text-[#aaa]">R</div>
      </div>
      <div className="flex flex-1">
        <div className="flex w-[36px] flex-col px-1 pt-px">
          <Knob label="Send" value="0.0 dB" at={0.98} />
          <Knob label="Predelay" value="0.00 ms" at={0} className="mt-1" />
          <div className="mt-0.5 flex gap-0.5">
            <button className="h-2 flex-1 border border-[#555] bg-[#ffad1f] leading-[6px]">ms</button>
            <button className="h-2 flex-1 border border-[#555] bg-[#bbb] leading-[6px]">♪</button>
          </div>
          <span className="mt-[7px] leading-[8px]">Feedback</span>
          <ValueBox label="Feedback" value="65 %" fill={65} />
        </div>
        <div className="flex min-w-0 flex-1 flex-col">
          <div className="flex h-[68px] flex-col justify-end bg-[#171717]">
            <svg viewBox="0 0 122 48" preserveAspectRatio="none" className="h-12 w-full">
              <path d="M2 23.500L3 4l1 14 1-8 1 10 2-3 1 4 3 1 2 1.500h108v1H14l-2 1-3 1-1 4-2-3-1 9-1-7-1 15z" fill="#ffad1f" />
            </svg>
            <div className="flex h-5 gap-[7px] pl-1 leading-[10px]">
              <button aria-label="Envelope" className="mt-0.5 size-1.5 shrink-0 bg-[#ffad1f]" />
              {[["Attack", "0.11 ms"], ["Decay", "119 ms"], ["Size", "62 %"]].map(([k, v]) => (
                <div key={k} className="whitespace-nowrap text-center"><div className="text-[#aaa]">{k}</div><div className="font-medium text-[#ffad1f]">{v}</div></div>
              ))}
              <div className="ml-auto w-[18px] text-[#ffad1f]">
                <svg viewBox="0 0 16 10" className="h-2.5 w-4"><path d="M0 5h4M8 5h3M4 5h3" stroke="#ffad1f" /><circle cx="5" cy="5" r="2" fill="#ffad1f" /><path d="M10 3h4v4h-4z" fill="none" stroke="#ffad1f" /></svg>
                Serial
              </div>
            </div>
          </div>
          <div className="flex flex-1 gap-1">
            <div className="flex flex-1 flex-col gap-0.5 pl-0.5">
              <div className="flex h-[15px] items-end justify-between">
                <span className="leading-[10px]">Convolution IR</span>
                <div className="mb-px flex rounded-full border border-[#444]">
                  <button aria-label="Previous IR" className="flex h-1.5 w-2 items-center justify-center"><svg viewBox="0 0 3 4" className="h-1 w-[3px]"><path d="M3 0v4L0 2z" /></svg></button>
                  <button aria-label="Next IR" className="flex h-1.5 w-2 items-center justify-center border-l border-[#444]"><svg viewBox="0 0 3 4" className="h-1 w-[3px]"><path d="M0 0v4l3-2z" /></svg></button>
                </div>
              </div>
              <MiniSelect label="IR category" value="Real Places" />
              <MiniSelect label="IR" value="Concrete Hall LR" />
            </div>
            <div className="w-5 border-l border-[#777] pl-px pt-px"><Knob label="Blend" value="100" at={0.3} className="items-start" /></div>
          </div>
        </div>
      </div>
    </section>
  );
}

function StatusBar() {
  return (
    <footer className="flex h-4 items-center gap-1.5 pl-[5px] pr-1">
      <button aria-label="Show detail view" className="size-3 rounded-full bg-[#4d4d4d] p-[3px]"><svg viewBox="0 0 6 6"><path d="M0 0l6 3-6 3z" fill="#b5b5b5" /></svg></button>
      <div className="h-3 flex-1 border border-[#4c4c4c] bg-[#8c8c8c] pl-1 leading-[10px]">Insert Mark 9.1.1 (Time: 0:11:636)</div>
      <svg viewBox="0 0 124 12" preserveAspectRatio="none" className="h-3 w-[124px]">
        <rect x=".5" y=".5" width="123" height="11" fill="#a9bac4" stroke="#444" />
        <path d="M12 5h12M30 3h14M2 8h14M46 7h14M74 3h16M92 5h12M62 8h18M104 8h14" stroke="#48555c" />
        <path d="M46 0v12" stroke="#555" />
      </svg>
      <div className="flex h-full w-[165px] items-center gap-1">
        <span className="pl-0.5 font-medium">Noise Bass</span>
        <svg viewBox="0 0 110 10" className="h-2.5 min-w-0 flex-1" preserveAspectRatio="none">
          <rect width="110" height="10" fill="#8c8c8c" />
          <path d="M5 2h6v6H5zM13 4h7v3h-7zM27 1h5v6h-5zM32 3h8v4h-8zM42 2h3v5h-3zM48 2h2v7h-2zM54 2h4v6h-4zM60 2h4v5h-4zM68 2h8v6h-8zM80 2h4v6h-4zM86 2h3v4h-3zM94 2h6v6h-6zM105 1h3v7h-3z" fill="#333" />
          <rect x="1" y="1" width="28" height="8" fill="none" stroke="#000" strokeWidth="2" />
        </svg>
        <button aria-label="Toggle device view" className="ml-1 size-3 rounded-full bg-[#4d4d4d] p-[3px]"><svg viewBox="0 0 6 6"><path d="M0 6l3-6 3 6z" fill="#b5b5b5" /></svg></button>
      </div>
    </footer>
  );
}

export default function App() {
  return (
    <div className="flex h-screen flex-col overflow-hidden bg-[#707070] font-[Roboto,'Liberation_Sans',sans-serif] text-[7px] text-[#111]">
      <TopBar />
      <main className="flex min-h-0 flex-1 gap-[7px] pl-[5px] pr-[5px] pt-px">
        <Browser />
        <Arrangement />
      </main>
      <div className="mx-[5px] mt-1 flex h-[122px] rounded-sm bg-[#505050] py-[3px]">
        <div className="flex w-[9px] items-center justify-center">
          <svg viewBox="0 0 3 26" className="h-[26px] w-[3px]"><path d="M1.500 0v26" stroke="#111" strokeWidth="2" strokeDasharray="2 1" /><path d="M1 4h1v2H1zM1 20h1v2H1z" fill="#f5d020" /></svg>
        </div>
        <Rack />
        <div className="w-px" />
        <Drift />
        <div className="ml-[3px] flex">
          <FoldedDevice name="Saturator" />
          <FoldedDevice name="Delay" />
          <FoldedDevice name="Hybrid Reverb" />
          <div className="w-[10px] bg-[#999]" />
        </div>
        <div className="flex w-2 items-center justify-center">
          <div className="h-5 w-1 bg-linear-to-b from-[#a2e34c] to-[#3fd458]" />
        </div>
        <HybridReverb />
      </div>
      <StatusBar />
    </div>
  );
}
